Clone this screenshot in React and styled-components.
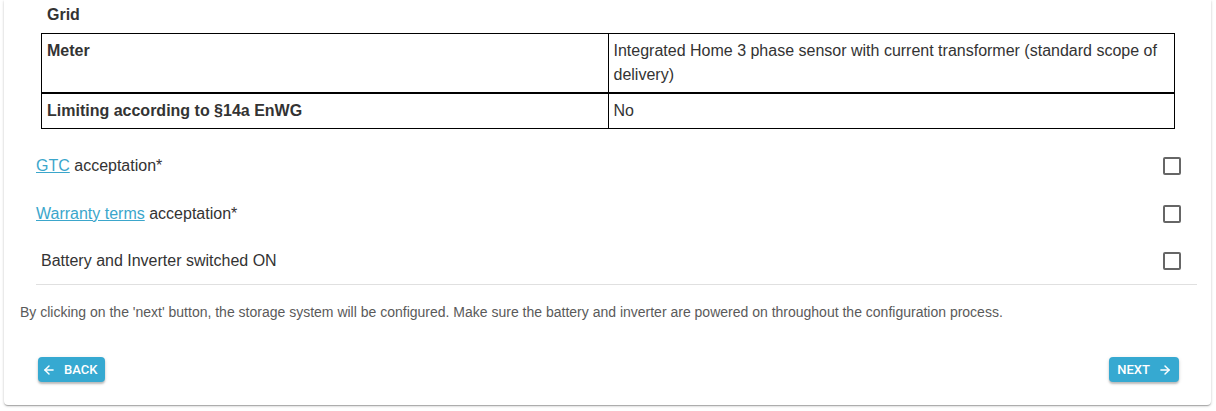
import React from 'react'
import styled, { createGlobalStyle } from 'styled-components'
import { ArrowLeft, ArrowRight } from 'lucide-react'

const GlobalStyle = createGlobalStyle`
  html, body {
    margin: 0;
    padding: 0;
    background: #fff;
  }
  body {
    font-family: "Liberation Sans", Arial, sans-serif;
    color: #333;
  }
`

const Page = styled.div`
  padding: 0 5px 5px 4px;
`

const Card = styled.div`
  background: #fff;
  border-radius: 0 0 4px 4px;
  box-shadow: 0 1px 3px rgba(0, 0, 0, 0.2), 0 1px 1px rgba(0, 0, 0, 0.14), 0 2px 1px -1px rgba(0, 0, 0, 0.12);
  padding: 3px 14px 23px 16px;
`

const SectionTitle = styled.div`
  font-size: 16px;
  font-weight: bold;
  line-height: 24px;
  margin: 0 0 6px 27px;
`

const Table = styled.table`
  border-collapse: collapse;
  margin: 0 22px 0 21px;
  width: calc(100% - 43px);
  border: 1px solid #000;
  font-size: 16px;
  line-height: 24px;
`

const Row = styled.tr`
  & + & {
    border-top: 2px solid #000;
  }
`

const Cell = styled.td`
  vertical-align: top;
  padding: 5px;
  width: 50%;
  font-weight: ${props => props.label ? 'bold' : 'normal'};
  border-left: ${props => props.label ? 'none' : '1px solid #000'};
`

const Checks = styled.div`
  margin: 13px 0 0 16px;
  border-bottom: 1px solid #e0e0e0;
`

const CheckRow = styled.label`
  display: flex;
  align-items: center;
  height: ${props => props.last ? 46 : 48}px;
  padding: 0 16px 0 ${props => props.indent || 0}px;
  font-size: 16px;
`

const CheckText = styled.span`
  flex: 1;
`

const Link = styled.a`
  color: #3ba6cb;
  text-decoration: underline;
  cursor: pointer;
`

const Box = styled.span`
  width: 14px;
  height: 14px;
  border: 2px solid #666;
  border-radius: 2px;
`

const Notice = styled.p`
  margin: 19px 0 0;
  font-size: 14px;
  line-height: 16px;
  color: #5a5a5a;
`

const Actions = styled.div`
  display: flex;
  justify-content: space-between;
  margin: 37px 18px 0 18px;
`

const Button = styled.button`
  display: flex;
  align-items: center;
  gap: 8px;
  height: 25px;
  padding: ${props => props.next ? '0 7px 0 8px' : '0 8px 0 4px'};
  border: none;
  border-radius: 4px;
  background: #36a9d1;
  color: #fff;
  font-family: Roboto, "Liberation Sans", Arial, sans-serif;
  font-weight: 500;
  font-size: 13px;
  letter-spacing: 0;
  text-transform: uppercase;
  box-shadow: 0 2px 2px rgba(0, 0, 0, 0.22), 0 1px 4px rgba(0, 0, 0, 0.1);
  cursor: pointer;
`

const App = () => (
  <Page>
    <GlobalStyle />
    <Card>
      <SectionTitle>Grid</SectionTitle>
      <Table>
        <tbody>
          <Row>
            <Cell label>Meter</Cell>
            <Cell>Integrated Home 3 phase sensor with current transformer (standard scope of delivery)</Cell>
          </Row>
          <Row>
            <Cell label>Limiting according to §14a EnWG</Cell>
            <Cell>No</Cell>
          </Row>
        </tbody>
      </Table>
      <Checks>
        <CheckRow>
          <CheckText><Link>GTC</Link> acceptation*</CheckText>
          <Box />
        </CheckRow>
        <CheckRow>
          <CheckText><Link>Warranty terms</Link> acceptation*</CheckText>
          <Box />
        </CheckRow>
        <CheckRow indent={5} last>
          <CheckText>Battery and Inverter switched ON</CheckText>
          <Box />
        </CheckRow>
      </Checks>
      <Notice>
        By clicking on the 'next' button, the storage system will be configured. Make sure the battery and inverter are powered on throughout the configuration process.
      </Notice>
      <Actions>
        <Button>
          <ArrowLeft size={14} strokeWidth={2.5} />
          Back
        </Button>
        <Button next>
          Next
          <ArrowRight size={14} strokeWidth={2.5} />
        </Button>
      </Actions>
    </Card>
  </Page>
)

export default App
